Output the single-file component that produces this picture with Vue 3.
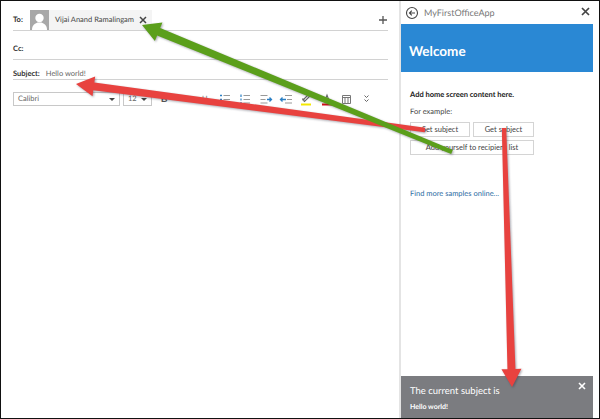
<template>
  <div class="frame">
    <div class="compose">
      <div class="row to-row">
        <span class="label">To:</span>
        <div class="avatar">
          <svg width="19" height="20" viewBox="0 0 19 20">
            <circle cx="9.5" cy="8" r="4.2" fill="#fff" />
            <path d="M2 20c0-5 3-6.500 5.500-7.500h4c2.500 1 5.500 2.500 5.500 7.500z" fill="#fff" />
          </svg>
        </div>
        <div class="chip">
          <span>Vijai Anand Ramalingam</span>
          <svg class="chip-x" width="8" height="8" viewBox="0 0 8 8">
            <path d="M1 1l6 6M7 1l-6 6" stroke="#444" stroke-width="1.500" />
          </svg>
        </div>
        <svg class="plus" width="10" height="10" viewBox="0 0 10 10">
          <path d="M5 1v8M1 5h8" stroke="#555" stroke-width="1.300" />
        </svg>
      </div>
      <div class="row cc-row">
        <span class="label">Cc:</span>
      </div>
      <div class="row subject-row">
        <span class="label">Subject:</span>
        <span class="subject">Hello world!</span>
      </div>
      <div class="toolbar">
        <div class="select font-select">
          <span>Calibri</span>
          <i class="caret"></i>
        </div>
        <div class="select size-select">
          <span>12</span>
          <i class="caret"></i>
        </div>
        <div class="tools">
          <span class="tool bold">B</span>
          <span class="tool letter">A</span>
          <span class="tool letter">U</span>
          <span v-for="tool in tools" :key="tool.name" class="tool">
            <svg width="14" height="14" viewBox="0 0 14 14" fill="none">
              <path v-for="line in tool.lines" :key="line.d" :d="line.d" :stroke="line.color" :stroke-width="line.width || 1" />
            </svg>
          </span>
        </div>
      </div>
    </div>

    <div class="pane">
      <div class="pane-title">
        <svg width="14" height="14" viewBox="0 0 14 14" fill="none">
          <circle cx="7" cy="7" r="5.500" stroke="#444" stroke-width="1.100" />
          <path d="M10 7H4.500M6.800 4.700L4.500 7l2.300 2.300" stroke="#444" stroke-width="1.100" />
        </svg>
        <span>MyFirstOfficeApp</span>
        <svg class="pane-x" width="9" height="9" viewBox="0 0 9 9">
          <path d="M1 1l7 7M8 1l-7 7" stroke="#444" stroke-width="1.700" />
        </svg>
      </div>
      <div class="welcome">Welcome</div>
      <div class="pane-body">
        <div class="lead">Add home screen content here.</div>
        <div class="example">For example:</div>
        <div class="buttons">
          <button class="btn">Set subject</button>
          <button class="btn">Get subject</button>
          <button class="btn wide">Add yourself to recipient list</button>
        </div>
        <a class="more">Find more samples online...</a>
      </div>
      <div class="notice">
        <div class="notice-title">The current subject is</div>
        <div class="notice-text">Hello world!</div>
        <svg class="notice-x" width="8" height="8" viewBox="0 0 8 8">
          <path d="M1 1l6 6M7 1l-6 6" stroke="#fff" stroke-width="1.600" />
        </svg>
      </div>
    </div>

    <svg class="arrows" width="600" height="419" viewBox="0 0 600 419">
      <polygon :points="arrow(425, 130, 76, 84)" fill="#e8423f" />
      <polygon :points="arrow(504, 128, 512, 387)" fill="#e8423f" />
      <polygon :points="arrow(452, 152, 142, 25)" fill="#5b9f1b" />
    </svg>
  </div>
</template>

<script setup>
const blue = "#2a7fc4";
const grey = "#999";

const tools = [
  {
    name: "bullets",
    lines: [
      { d: "M2 3.500h2M2 7.500h2M2 11h2", color: blue, width: 1.400 },
      { d: "M5.500 3.500H12M5.500 7.500H12M5.500 11H12", color: grey },
    ],
  },
  {
    name: "numbers",
    lines: [
      { d: "M3 2.500v2.500M3 6.500v2M3 10v2.500", color: blue, width: 1.200 },
      { d: "M5.500 3.500H12M5.500 7.500H12M5.500 11H12", color: grey },
    ],
  },
  {
    name: "indent",
    lines: [
      { d: "M1.500 3.500h7M1.500 7.500h5M1.500 11h7", color: grey },
      { d: "M8 7.500h4.500M10.500 5.500l2 2-2 2", color: blue, width: 1.300 },
    ],
  },
  {
    name: "outdent",
    lines: [
      { d: "M6 3.500h7M8 7.500h5M6 11h7", color: grey },
      { d: "M7 7.500H1.500M3.500 5.500l-2 2 2 2", color: blue, width: 1.300 },
    ],
  },
  {
    name: "highlight",
    lines: [
      { d: "M4 8l5-5 1.500 1.500-5 5zM3 7h3", color: "#666", width: 1.100 },
      { d: "M2 12.500h10", color: "#f5e800", width: 2 },
    ],
  },
  {
    name: "colour",
    lines: [
      { d: "M5 8.500L7 3l2 5.500", color: "#666", width: 1.100 },
      { d: "M2 12.500h10", color: "#d90f16", width: 2 },
    ],
  },
  {
    name: "table",
    lines: [
      { d: "M2.500 3.500h8v8h-8zM2.500 5.500h8M5 5.500v6M8 5.500v6", color: "#777" },
    ],
  },
  {
    name: "more",
    lines: [{ d: "M4.500 3.500l2 2 2-2M4.500 7.500l2 2 2-2", color: "#666" }],
  },
];

// shaft widens towards the head, head is a plain triangle at the tip
const arrow = (x1, y1, x2, y2) => {
  const len = Math.hypot(x2 - x1, y2 - y1);
  const ux = (x2 - x1) / len;
  const uy = (y2 - y1) / len;
  const nx = -uy;
  const ny = ux;
  const bx = x2 - ux * 18;
  const by = y2 - uy * 18;
  const at = (x, y, w) => `${x + nx * w},${y + ny * w}`;
  return [
    at(x1, y1, 2.200),
    at(bx, by, 4),
    at(bx, by, 10),
    `${x2},${y2}`,
    at(bx, by, -10),
    at(bx, by, -4),
    at(x1, y1, -2.200),
  ].join(" ");
};
</script>

<style scoped>
.frame {
  position: relative;
  box-sizing: border-box;
  display: flex;
  width: 600px;
  height: 419px;
  border: 1px solid #111;
  background: #fff;
  font-family: Lato, "Open Sans", sans-serif;
  font-size: 7.500px;
  line-height: 10px;
  text-rendering: geometricPrecision;
  color: #444;
  white-space: nowrap;
  overflow: hidden;
}

.compose {
  box-sizing: border-box;
  width: 398px;
  padding: 9px 11px 0 12px;
}

.row {
  display: flex;
  align-items: center;
  border-bottom: 1px solid #d2d2d2;
}

.to-row {
  height: 20px;
}

.cc-row {
  align-items: flex-end;
  height: 29px;
  padding-bottom: 5px;
  box-sizing: border-box;
}

.subject-row {
  align-items: flex-end;
  height: 20px;
  box-sizing: border-box;
}

.label {
  color: #333;
  font-weight: 700;
}

.to-row .label {
  width: 17px;
}

.avatar {
  display: flex;
  width: 19px;
  height: 20px;
  background: #a8a8a8;
}

.chip {
  display: flex;
  align-items: center;
  width: 103px;
  height: 20px;
  padding-left: 6px;
  box-sizing: border-box;
  background: #f4f4f4;
}

.chip-x {
  margin-left: auto;
  margin-right: 5px;
}

.plus {
  margin-left: auto;
}

.subject {
  margin-left: 6px;
  color: #666;
}

.toolbar {
  display: flex;
  align-items: center;
  margin-top: 12px;
}

.select {
  display: flex;
  align-items: center;
  justify-content: space-between;
  box-sizing: border-box;
  height: 14px;
  padding: 0 4px;
  border: 1px solid #c8c8c8;
  color: #666;
}

.font-select {
  width: 107px;
}

.size-select {
  width: 29px;
  margin-left: 3px;
}

.caret {
  border: solid transparent;
  border-width: 3px 3px 0;
  border-top-color: #444;
}

.tools {
  display: flex;
  margin-left: 2px;
}

.tool {
  display: flex;
  align-items: center;
  justify-content: center;
  width: 20.300px;
  height: 14px;
}

.bold {
  font-family: "Liberation Sans", sans-serif;
  font-weight: 700;
  font-size: 9px;
  color: #555;
}

.letter {
  color: #777;
}

.pane {
  display: flex;
  flex-direction: column;
  box-sizing: border-box;
  width: 194px;
  border-left: 2px solid #e4e4e4;
}

.pane-title {
  display: flex;
  align-items: center;
  gap: 5px;
  height: 23px;
  padding-left: 4px;
  font-size: 9px;
  color: #777;
}

.pane-x {
  margin-left: auto;
  margin-top: -3px;
  margin-right: 3px;
}

.welcome {
  display: flex;
  align-items: center;
  box-sizing: border-box;
  height: 48px;
  padding-left: 8px;
  padding-top: 6px;
  background: #2a88d4;
  color: #fff;
  font-size: 13.500px;
  font-weight: 700;
}

.pane-body {
  flex: 1;
  padding: 18px 0 0 9px;
}

.lead {
  color: #222;
  font-weight: 700;
}

.example {
  margin-top: 7px;
  color: #444;
}

.buttons {
  display: grid;
  grid-template-columns: 60px 61px;
  gap: 3px;
  margin-top: 5px;
  width: 124px;
}

.btn {
  height: 15px;
  padding: 0;
  border: 1px solid #d4d4d4;
  background: #fff;
  font: inherit;
  color: #444;
}

.wide {
  grid-column: 1 / 3;
}

.more {
  display: block;
  margin-top: 34px;
  color: #2b6ca3;
}

.notice {
  position: relative;
  box-sizing: border-box;
  height: 42px;
  padding: 11px 0 0 9px;
  background: #7b7c80;
  color: #fff;
}

.notice-title {
  font-size: 9.500px;
}

.notice-text {
  margin-top: 5px;
  font-size: 7px;
  font-weight: 700;
}

.notice-x {
  position: absolute;
  top: 6px;
  right: 7px;
}

.arrows {
  position: absolute;
  top: -1px;
  left: -1px;
  filter: drop-shadow(1px 1px 1px rgba(40, 40, 60, 0.4));
}
</style>

<style>
html,
body {
  background: #fff;
}
</style>
